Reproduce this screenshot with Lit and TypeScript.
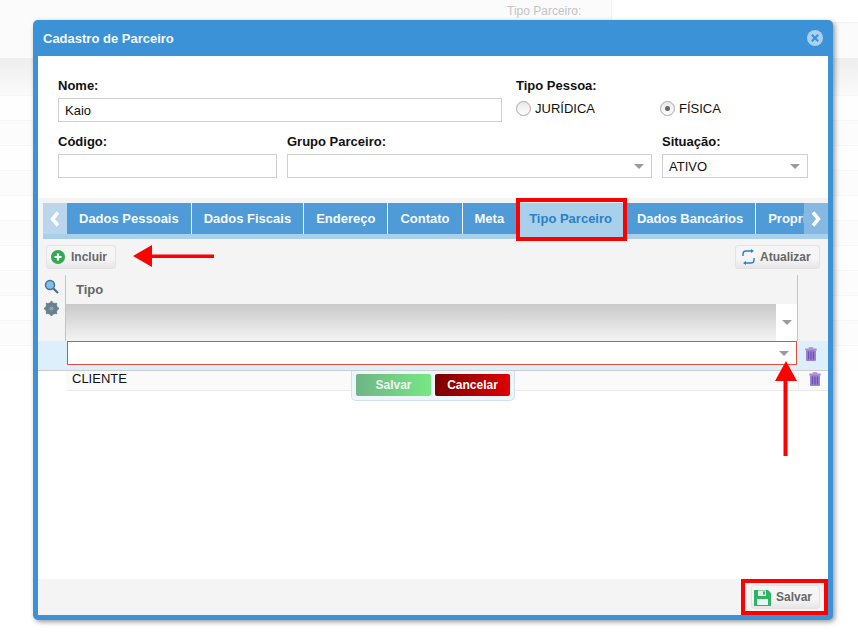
import { LitElement, html, css, svg } from "lit";
import { customElement } from "lit/decorators.js";

const tabs = ["Dados Pessoais", "Dados Fiscais", "Endereço", "Contato", "Meta", "Tipo Parceiro", "Dados Bancários", "Proprietário"];

const trash = svg`<svg width="12" height="14" viewBox="0 0 12 14"><rect x="3.5" y="0" width="5" height="2" rx="1" fill="#b79fdc"/><rect x="0" y="1.5" width="12" height="2" rx="1" fill="#a98fd6"/><rect x="1" y="3" width="10" height="11" rx="1" fill="#9c84d0"/><path d="M3.5 4.5v8M6 4.5v8M8.5 4.5v8" stroke="#6d4fb0" stroke-width="1.3"/></svg>`;
const caret = svg`<svg width="10" height="5" viewBox="0 0 10 5"><path d="M0 0h10L5 5z" fill="#9a9a9a"/></svg>`;

@customElement("app-root")
export class AppRoot extends LitElement {
  static styles = css`
    :host { display: block; width: 858px; height: 642px; position: relative; overflow: hidden; background: #fff; font-family: "Liberation Sans", Arial, sans-serif; font-size: 13px; color: #111; }
    .bg { height: 642px; display: flex; flex-direction: column; }
    .bg-top { height: 58px; display: flex; }
    .bg-top .l { width: 612px; background: #fbfbfb; border-right: 1px solid #f2f2f2; box-sizing: border-box; padding: 4px 31px 0 507px; font-size: 12px; color: #c4c4c4; white-space: nowrap; }
    .bg-top .r { flex: 1; margin-top: 22px; background: #fbfbfb; border-top: 1px solid #f3f3f3; }
    .bg-band { height: 37px; background: linear-gradient(#eeeeee, #fafafa); }
    .bg-row { height: 25px; border-top: 1px solid #f7f7f7; box-sizing: border-box; background: #fefefe; }
    .bg-row:nth-child(even) { background: #fcfcfc; }
    .modal { position: absolute; left: 33px; top: 20px; width: 800px; height: 600px; box-sizing: border-box; background: #3b92d6; border-radius: 5px; box-shadow: 2px 2px 5px rgba(0,0,0,.4); display: flex; flex-direction: column; padding: 0 5px 5px; }
    .title { height: 36px; flex: none; display: flex; align-items: center; justify-content: space-between; color: #f3f8fc; font-weight: bold; font-size: 13px; padding: 0 5px; }
    .title span { padding-top: 1px; }
    .body { flex: 1; background: #fff; display: flex; flex-direction: column; min-height: 0; }
    .form { height: 142px; flex: none; box-sizing: border-box; padding: 22px 20px 0; display: flex; flex-direction: column; gap: 12px; }
    .frow { display: flex; }
    .field { display: flex; flex-direction: column; }
    label { font-weight: bold; font-size: 13px; line-height: 16px; height: 20px; color: #111; }
    .inp { height: 24px; box-sizing: border-box; border: 1px solid #cfcfcf; background: #fff; display: flex; align-items: center; justify-content: space-between; padding: 0 6px; font-size: 13px; }
    .inp svg { margin-right: 1px; }
    .radios { display: flex; height: 24px; align-items: flex-start; }
    .radio { display: flex; align-items: center; gap: 4px; height: 20px; font-size: 13px; }
    .dot { width: 15px; height: 15px; box-sizing: border-box; border-radius: 50%; border: 1px solid #a9a9a9; background: linear-gradient(#e9e9e9, #fdfdfd); display: flex; align-items: center; justify-content: center; }
    .dot.on::after { content: ""; width: 5px; height: 5px; border-radius: 50%; background: #666; }
    .panel { flex: 1; background: #f4f4f4; display: flex; flex-direction: column; min-height: 0; }
    .tabstrip { margin: 5px 0 0 5px; height: 36px; box-sizing: border-box; border-bottom: 5px solid #a9d0ea; display: flex; position: relative; overflow: hidden; }
    .nav { width: 24px; flex: none; background: #b9d6ec; color: #fff; display: flex; align-items: center; justify-content: center; }
    .nav.r { background: #86b9e2; position: absolute; right: 0; top: 0; bottom: 0; z-index: 1; }
    .tab { flex: none; height: 31px; background: #4e9bd8; color: #f6fafd; font-weight: bold; font-size: 13px; display: flex; align-items: center; padding: 0 12px; margin-right: 1px; white-space: nowrap; box-sizing: border-box; }
    .tab.on { background: #a9d0ea; color: #2a80c8; }
    .toolbar { height: 36px; flex: none; display: flex; justify-content: space-between; align-items: flex-start; padding: 6px 8px 0; box-sizing: border-box; }
    .btn { height: 24px; box-sizing: border-box; border: 1px solid #e3e3e3; border-radius: 3px; background: linear-gradient(#f5f5f5 60%, #e6e6e6); color: #666; font-weight: bold; font-size: 12px; display: flex; align-items: center; gap: 6px; padding: 0 4px; }
    .btn.upd { width: 85px; padding-left: 5px; gap: 4px; }
    .btn.inc { width: 70px; }
    .btn.sav { width: 69px; gap: 5px; padding-left: 2px; }
    .grid { display: grid; grid-template-columns: 28px 1fr 30px; grid-template-rows: 29px 37px 30px 20px; }
    .tools { grid-row: 1 / span 2; border-right: 1px solid #c4c4c4; display: flex; flex-direction: column; align-items: center; gap: 7px; padding-top: 4px; }
    .th { border-right: 1px solid #c4c4c4; font-weight: bold; font-size: 13px; color: #666; padding-left: 10px; display: flex; align-items: center; }
    .filter { border-right: 1px solid #c4c4c4; background: #fff; display: flex; }
    .shade { flex: 1; background: linear-gradient(#c9c9c9, #f4f4f4); }
    .cell-caret { width: 21px; display: flex; align-items: center; justify-content: center; }
    .blank { background: #f4f4f4; }
    .edit { grid-column: 1 / -1; background: #deeffc; border-bottom: 1px solid #cdcdcd; display: grid; grid-template-columns: 29px 730px 1fr; box-sizing: border-box; }
    .edit-box { height: 24px; box-sizing: border-box; border: 1px solid #e0503f; background: #fff; display: flex; align-items: center; justify-content: flex-end; padding-right: 7px; }
    .edit-del { display: flex; justify-content: center; padding: 6px 4px 0 0; }
    .spacer { background: #fff; }
    .cli { background: #fafafa; border-bottom: 1px solid #eaeaea; padding-left: 6px; font-size: 13px; line-height: 15px; box-sizing: border-box; }
    .cli-del { background: #fafafa; border-bottom: 1px solid #eaeaea; border-left: 1px solid #eeeeee; display: flex; justify-content: flex-start; padding: 1px 0 0 10px; box-sizing: border-box; }
    .rest { flex: 1; background: #fff; }
    .foot { height: 36px; flex: none; display: flex; justify-content: flex-end; align-items: flex-start; padding: 6px 8px 0 0; box-sizing: border-box; }
    .pop { position: absolute; left: 351px; top: 371px; width: 164px; height: 30px; box-sizing: border-box; background: #eef5fb; border: 1px solid #cfe0ee; border-top: 0; border-radius: 0 0 5px 5px; display: flex; gap: 4px; padding: 3px 4px 0; }
    .pop div { width: 75px; height: 22px; border-radius: 2px; color: #f3f3f3; font-weight: bold; font-size: 12px; display: flex; align-items: center; justify-content: center; }
    .pop .ok { background: linear-gradient(90deg, #6fb585, #76e884); }
    .pop .no { background: linear-gradient(90deg, #7a0000, #e00000); color: #fff; }
    .mark { position: absolute; box-sizing: border-box; border: 4px solid #f00; pointer-events: none; }
    .m1 { left: 516px; top: 198px; width: 111px; height: 43px; }
    .m2 { left: 741px; top: 579px; width: 87px; height: 36px; }
    .arrow { position: absolute; left: 0; top: 0; pointer-events: none; }
  `;

  render() {
    return html`
      <div class="bg">
        <div class="bg-top"><div class="l">Tipo Parceiro:</div><div class="r"></div></div>
        <div class="bg-band"></div>
        ${Array.from({ length: 11 }, () => html`<div class="bg-row"></div>`)}
      </div>
      <div class="modal">
        <div class="title"><span>Cadastro de Parceiro</span>
          <svg width="16" height="16" viewBox="0 0 16 16"><circle cx="8" cy="8" r="8" fill="#a9d0ee"/><path d="M4.8 4.8l6.4 6.4M11.2 4.8l-6.4 6.4" stroke="#3b92d6" stroke-width="2.2"/></svg>
        </div>
        <div class="body">
          <div class="form">
            <div class="frow">
              <div class="field" style="width:444px"><label>Nome:</label><div class="inp">Kaio</div></div>
              <div class="field" style="margin-left:14px">
                <label>Tipo Pessoa:</label>
                <div class="radios">
                  <div class="radio" style="width:144px"><span class="dot"></span>JURÍDICA</div>
                  <div class="radio"><span class="dot on"></span>FÍSICA</div>
                </div>
              </div>
            </div>
            <div class="frow">
              <div class="field" style="width:219px"><label>Código:</label><div class="inp"></div></div>
              <div class="field" style="width:365px;margin-left:10px"><label>Grupo Parceiro:</label><div class="inp"><span></span>${caret}</div></div>
              <div class="field" style="width:146px;margin-left:10px"><label>Situação:</label><div class="inp">ATIVO${caret}</div></div>
            </div>
          </div>
          <div class="panel">
            <div class="tabstrip">
              <div class="nav"><svg width="10" height="16" viewBox="0 0 10 16"><path d="M8 1.500L2.500 8 8 14.500" fill="none" stroke="#fff" stroke-width="3.500"/></svg></div>
              ${tabs.map((t) => html`<div class="tab ${t === "Tipo Parceiro" ? "on" : ""}">${t}</div>`)}
              <div class="nav r"><svg width="10" height="16" viewBox="0 0 10 16"><path d="M2 1.500L7.500 8 2 14.500" fill="none" stroke="#fff" stroke-width="3.500"/></svg></div>
            </div>
            <div class="toolbar">
              <div class="btn inc">
                <svg width="14" height="14" viewBox="0 0 14 14"><circle cx="7" cy="7" r="7" fill="#35a853"/><path d="M7 3.500v7M3.500 7h7" stroke="#fff" stroke-width="2.200"/></svg>Incluir
              </div>
              <div class="btn upd">
                <svg width="15" height="16" viewBox="0 0 15 16"><path d="M2 7V5a3 3 0 0 1 3-3h6M13 9v2a3 3 0 0 1-3 3H4" fill="none" stroke="#2a7fc9" stroke-width="1.400"/><path d="M10 0l3 2-3 2zM5 12l-3 2 3 2z" fill="#2a7fc9"/></svg>Atualizar
              </div>
            </div>
            <div class="grid">
              <div class="tools">
                <svg width="15" height="15" viewBox="0 0 15 15"><circle cx="6" cy="6" r="4.500" fill="#7cc0ee" stroke="#4a6f8c" stroke-width="1.400"/><path d="M9.500 9.500l4.500 4.500" stroke="#4a6f8c" stroke-width="2.200"/></svg>
                <svg width="15" height="15" viewBox="0 0 15 15"><circle cx="7.500" cy="7.500" r="4.600" fill="none" stroke="#66808f" stroke-width="3.400"/><path d="M7.500 0v15M0 7.500h15M2.200 2.200l10.600 10.600M12.800 2.200L2.200 12.800" stroke="#66808f" stroke-width="2"/><circle cx="7.500" cy="7.500" r="2" fill="#8fa3ae"/></svg>
              </div>
              <div class="th">Tipo</div>
              <div class="blank"></div>
              <div class="filter"><div class="shade"></div><div class="cell-caret">${caret}</div></div>
              <div class="blank"></div>
              <div class="edit">
                <div></div>
                <div class="edit-box">${caret}</div>
                <div class="edit-del">${trash}</div>
              </div>
              <div class="spacer"></div>
              <div class="cli">CLIENTE</div>
              <div class="cli-del">${trash}</div>
            </div>
            <div class="rest"></div>
            <div class="foot">
              <div class="btn sav">
                <svg width="17" height="17" viewBox="0 0 17 17"><path d="M0 1h14l3 3v13H0z" fill="#2fb467"/><rect x="4" y="1.500" width="8" height="5.500" fill="#dff3e6"/><rect x="9" y="2.500" width="2" height="3" fill="#2fb467"/><rect x="3" y="10" width="11" height="6" fill="#eaf7ef"/></svg>Salvar
              </div>
            </div>
          </div>
        </div>
      </div>
      <div class="pop"><div class="ok">Salvar</div><div class="no">Cancelar</div></div>
      <div class="mark m1"></div>
      <div class="mark m2"></div>
      <svg class="arrow" width="858" height="642" viewBox="0 0 858 642">
        <path d="M133 256L152 245V254.500H214V258H152V267z" fill="#f00"/>
        <path d="M786 361L797 381H787.500V456H783.500V381H775z" fill="#f00"/>
      </svg>
    `;
  }
}
